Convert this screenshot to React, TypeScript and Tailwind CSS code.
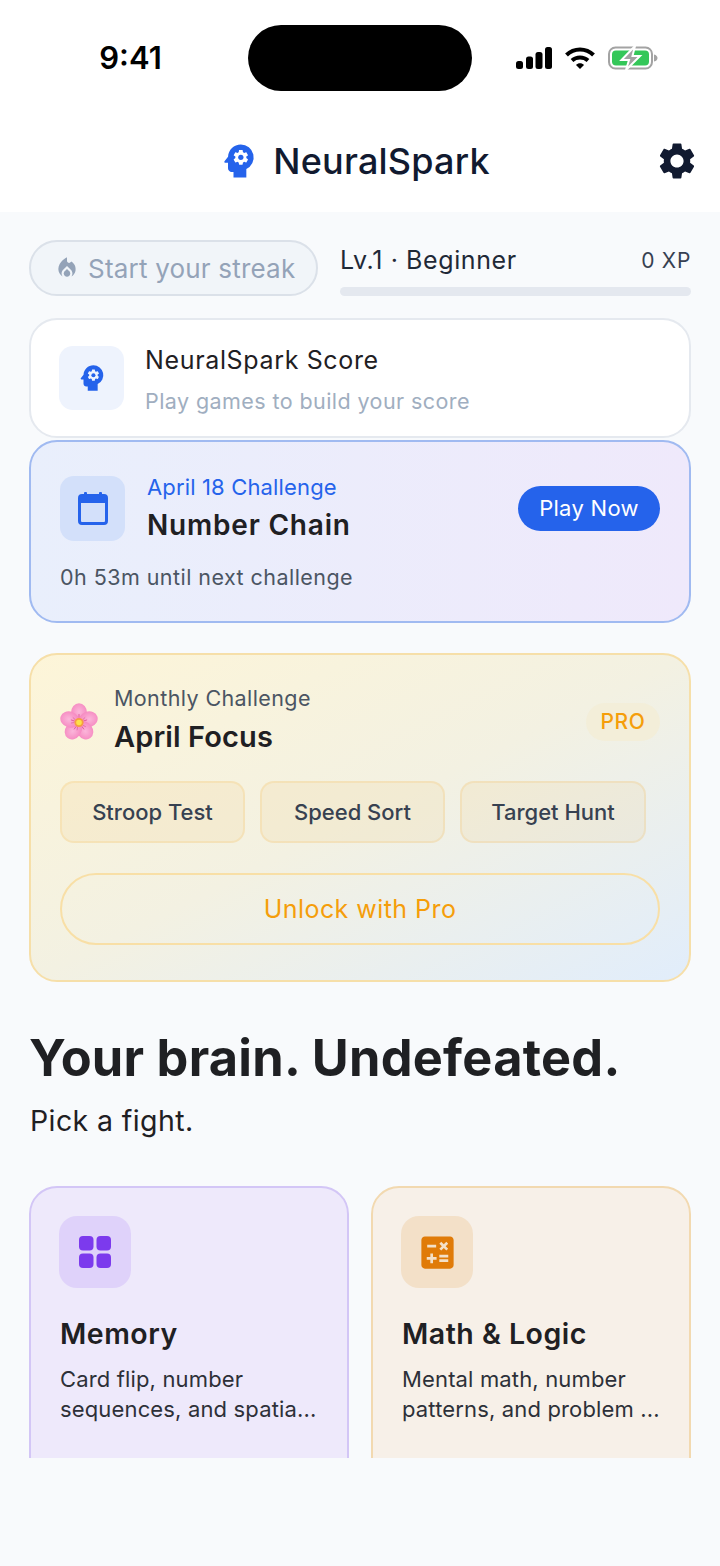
import React from "react";
import { MdPsychology, MdSettings, MdLocalFireDepartment, MdCalculate } from "react-icons/md";

function Signal() {
  return (
    <svg width="36" height="22" viewBox="0 0 36 22" fill="#000">
      <rect x="0" y="14" width="7" height="8" rx="2.5" />
      <rect x="10" y="9.5" width="7" height="12.5" rx="2.5" />
      <rect x="19.5" y="5" width="7" height="17" rx="2.5" />
      <rect x="29" y="0" width="7" height="22" rx="2.5" />
    </svg>
  );
}

function Wifi() {
  return (
    <svg width="30" height="22" viewBox="0 0 30 22" fill="none" stroke="#000" strokeWidth="4">
      <path d="M1.5 8 C9 0.5 21 0.5 28.5 8" />
      <path d="M7 13.5 C11.5 9.5 18.5 9.5 23 13.5" />
      <path d="M11 18 L15 22 L19 18 C17 15.8 13 15.8 11 18 Z" fill="#000" stroke="none" />
    </svg>
  );
}

function Battery() {
  return (
    <svg width="50" height="24" viewBox="0 0 50 24" fill="none">
      <rect x="1" y="1.5" width="43" height="21" rx="6.5" stroke="#a3a3a3" strokeWidth="2" />
      <rect x="4" y="4.5" width="37" height="15" rx="4" fill="#34c759" />
      <path d="M46 8.5 C48.5 9 49.5 10.5 49.5 12 C49.5 13.5 48.5 15 46 15.5 Z" fill="#a3a3a3" />
      <path d="M27 0 L13.5 14 H21 L18 24 L32 10 H24.5 Z" fill="#a3a3a3" stroke="#fff" strokeWidth="2" />
    </svg>
  );
}

function Calendar() {
  return (
    <svg width="30" height="33" viewBox="0 0 30 33" fill="none">
      <rect x="1.5" y="3.5" width="27" height="28" rx="2.5" stroke="#2563eb" strokeWidth="3" />
      <path d="M1.5 6 a2.5 2.5 0 0 1 2.5 -2.5 h22 a2.5 2.5 0 0 1 2.5 2.5 v5 h-27 Z" fill="#2563eb" />
      <rect x="6" y="0" width="3" height="5" rx="1" fill="#2563eb" />
      <rect x="21" y="0" width="3" height="5" rx="1" fill="#2563eb" />
    </svg>
  );
}

function Flower() {
  const petals = [0, 72, 144, 216, 288];
  return (
    <svg width="38" height="38" viewBox="0 0 38 38">
      <defs>
        <radialGradient id="petal" cx="50%" cy="45%" r="60%">
          <stop offset="0%" stopColor="#fbb6da" />
          <stop offset="100%" stopColor="#f583bd" />
        </radialGradient>
      </defs>
      {petals.map((a) => (
        <g key={a} transform={`rotate(${a} 19 19.5)`}>
          <ellipse cx="19" cy="9.8" rx="8" ry="9.6" fill="url(#petal)" />
          <line x1="19" y1="11" x2="19" y2="15" stroke="#d9468f" strokeWidth="0.7" />
          <line x1="16" y1="12" x2="17.5" y2="15" stroke="#d9468f" strokeWidth="0.5" />
          <line x1="22" y1="12" x2="20.5" y2="15" stroke="#d9468f" strokeWidth="0.5" />
        </g>
      ))}
      <circle cx="19" cy="19.5" r="4.6" fill="#f59e42" />
      <circle cx="19" cy="19.5" r="2.8" fill="#fde047" />
    </svg>
  );
}

function Chip({ label, w }: { label: string; w: string }) {
  return (
    <div className={`${w} h-[62px] rounded-[14px] border-2 border-[#f59e0b]/[0.12] bg-[#f59e0b]/[0.07] flex items-center justify-center text-[22px] font-medium text-[#374151]`}>
      {label}
    </div>
  );
}

export default function App() {
  return (
    <div
      className="w-[720px] h-[1566px] bg-[#f8fafc] overflow-hidden flex flex-col"
      style={{ fontFamily: '"Inter", "Liberation Sans", sans-serif' }}
    >
      <header className="bg-white h-[212px] shrink-0 flex flex-col">
        <div className="h-[132px] pt-[25px] flex items-start">
          <div className="w-[248px] h-[66px] flex items-center justify-center pl-[13px]">
            <span className="text-[31px] font-semibold text-black">9:41</span>
          </div>
          <div className="w-[224px] h-[66px] rounded-[33px] bg-black" />
          <div className="h-[66px] pl-[44px] flex items-center gap-[13px]">
            <Signal />
            <Wifi />
            <Battery />
          </div>
        </div>
        <div className="relative h-[58px] flex items-center justify-center gap-[12px] pr-[13px]">
          <MdPsychology className="text-[#2563eb] w-[44px] h-[44px]" />
          <span className="text-[36px] font-medium text-[#111a30] tracking-[0.2px]">NeuralSpark</span>
          <MdSettings className="absolute right-[21px] top-[7px] text-[#111a30] w-[44px] h-[44px]" />
        </div>
      </header>

      <main className="h-[1246px] shrink-0 overflow-hidden px-[29px] pt-[28px]">
        <div className="flex gap-[22px] h-[56px]">
          <div className="w-[289px] h-[56px] rounded-[28px] border-2 border-[#dbe1e9] bg-[#f1f5f9] flex items-center pl-[23px] gap-[8px]">
            <MdLocalFireDepartment className="text-[#94a3b8] w-[26px] h-[26px]" />
            <span className="text-[26px] text-[#94a3b8] tracking-[0.2px]">Start your streak</span>
          </div>
          <div className="flex-1 flex flex-col pt-[2px]">
            <div className="flex justify-between items-center h-[36px] pt-[1px]">
              <span className="text-[25px] text-[#1f2937] tracking-[0.6px]">Lv.1 · Beginner</span>
              <span className="text-[21px] text-[#374151] tracking-[0.7px]">0 XP</span>
            </div>
            <div className="h-[11px] mt-[9px] rounded-full bg-[#e4e8ef]" />
          </div>
        </div>

        <section className="mt-[22px] h-[120px] rounded-[28px] border-2 border-[#e5e9ef] bg-white flex items-center pl-[28px] gap-[21px]">
          <div className="w-[65px] h-[64px] rounded-[14px] bg-[#eef3fd] flex items-center justify-center">
            <MdPsychology className="text-[#2563eb] w-[34px] h-[34px]" />
          </div>
          <div>
            <div className="text-[25px] leading-[36px] text-[#1f2023] tracking-[0.65px] mt-[1px]">NeuralSpark Score</div>
            <div className="mt-[8px] text-[21.5px] leading-[30px] text-[#a0aec0] tracking-[0.42px]">Play games to build your score</div>
          </div>
        </section>

        <section className="mt-[2px] h-[183px] rounded-[28px] border-2 border-[#a0baf1] bg-linear-to-r from-[#e9effc] to-[#efe9fb] pl-[29px] pr-[29px] pt-[32px]">
          <div className="flex items-center">
            <div className="w-[65px] h-[65px] rounded-[14px] bg-[#d3e0fa] flex items-center justify-center">
              <Calendar />
            </div>
            <div className="ml-[22px] flex-1">
              <div className="text-[22px] leading-[30px] text-[#2563eb] tracking-[0.15px] mt-[-2px]">April 18 Challenge</div>
              <div className="mt-[5px] text-[28px] leading-[36px] font-semibold text-[#1f2023] tracking-[0.8px]">Number Chain</div>
            </div>
            <div className="w-[142px] h-[45px] rounded-full bg-[#2563eb] flex items-center justify-center text-[22px] text-white tracking-[0.3px]">
              Play Now
            </div>
          </div>
          <div className="mt-[19px] text-[21.5px] leading-[30px] text-[#4b5563] tracking-[0.45px]">0h 53m until next challenge</div>
        </section>

        <section className="mt-[30px] h-[329px] rounded-[28px] border-2 border-[#f6dfa9] bg-linear-to-br from-[#fdf5d8] via-[#f3f1e2] to-[#e1edfb] pl-[29px] pr-[29px] pt-[31px]">
          <div className="flex items-center h-[72px]">
            <Flower />
            <div className="ml-[16px] flex-1 mt-[-5px]">
              <div className="text-[21.5px] leading-[30px] text-[#4b5563] tracking-[0.4px] mt-[-1px]">Monthly Challenge</div>
              <div className="mt-[5px] text-[29px] leading-[38px] font-semibold text-[#1f2023] tracking-[0.1px]">April Focus</div>
            </div>
            <div className="w-[74px] h-[38px] rounded-[19px] bg-[#f3eed9] flex items-center justify-center text-[21px] font-medium text-[#f59e0b] tracking-[0.6px]">
              PRO
            </div>
          </div>
          <div className="flex gap-[15px] mt-[23px]">
            <Chip label="Stroop Test" w="w-[185px]" />
            <Chip label="Speed Sort" w="w-[185px]" />
            <Chip label="Target Hunt" w="w-[186px]" />
          </div>
          <div className="mt-[30px] h-[72px] pt-[2px] rounded-[36px] border-2 border-[#f8dfa6] flex items-center justify-center text-[25px] text-[#f59e0b] tracking-[0.45px]">
            Unlock with Pro
          </div>
        </section>

        <h1 className="mt-[44px] text-[50.5px] leading-[64px] font-bold text-[#1f2023] tracking-[0.25px]">Your brain. Undefeated.</h1>
        <p className="mt-[13px] ml-[1px] text-[28.5px] leading-[36px] text-[#1f2023] tracking-[0.4px]">Pick a fight.</p>

        <div className="mt-[47px] flex gap-[22px]">
          <GameCard
            border="border-[#d3c6f6]"
            bg="bg-[#eee9fb]"
            iconBg="bg-[#dfd2fa]"
            title="Memory"
            lines={["Card flip, number", "sequences, and spatia..."]}
            icon={
              <svg width="32" height="32" viewBox="0 0 32 32" fill="#7c3aed">
                <rect x="0" y="0" width="14.5" height="14.5" rx="4" />
                <rect x="17.5" y="0" width="14.5" height="14.5" rx="4" />
                <rect x="0" y="17.5" width="14.5" height="14.5" rx="4" />
                <rect x="17.5" y="17.5" width="14.5" height="14.5" rx="4" />
              </svg>
            }
          />
          <GameCard
            border="border-[#f2d9b0]"
            bg="bg-[#f7f0e8]"
            iconBg="bg-[#f3e0c8]"
            title="Math & Logic"
            lines={["Mental math, number", "patterns, and problem ..."]}
            icon={<MdCalculate className="text-[#e07b08] w-[43px] h-[43px]" />}
          />
        </div>
      </main>
    </div>
  );
}

function GameCard({ border, bg, iconBg, title, lines, icon }: { border: string; bg: string; iconBg: string; title: string; lines: string[]; icon: React.ReactNode }) {
  return (
    <div className={`w-[320px] h-[340px] shrink-0 rounded-[28px] border-2 ${border} ${bg} pl-[28px] pt-[28px]`}>
      <div className={`w-[72px] h-[72px] rounded-[18px] ${iconBg} flex items-center justify-center`}>{icon}</div>
      <div className="ml-[1px] mt-[26px] text-[28.5px] leading-[40px] font-semibold text-[#1f2023] tracking-[0.5px]">{title}</div>
      <div className="ml-[1px] mt-[10px] text-[22px] leading-[30px] text-[#2d3038] tracking-[0.15px]">
        {lines.map((l) => (
          <div key={l}>{l}</div>
        ))}
      </div>
    </div>
  );
}
